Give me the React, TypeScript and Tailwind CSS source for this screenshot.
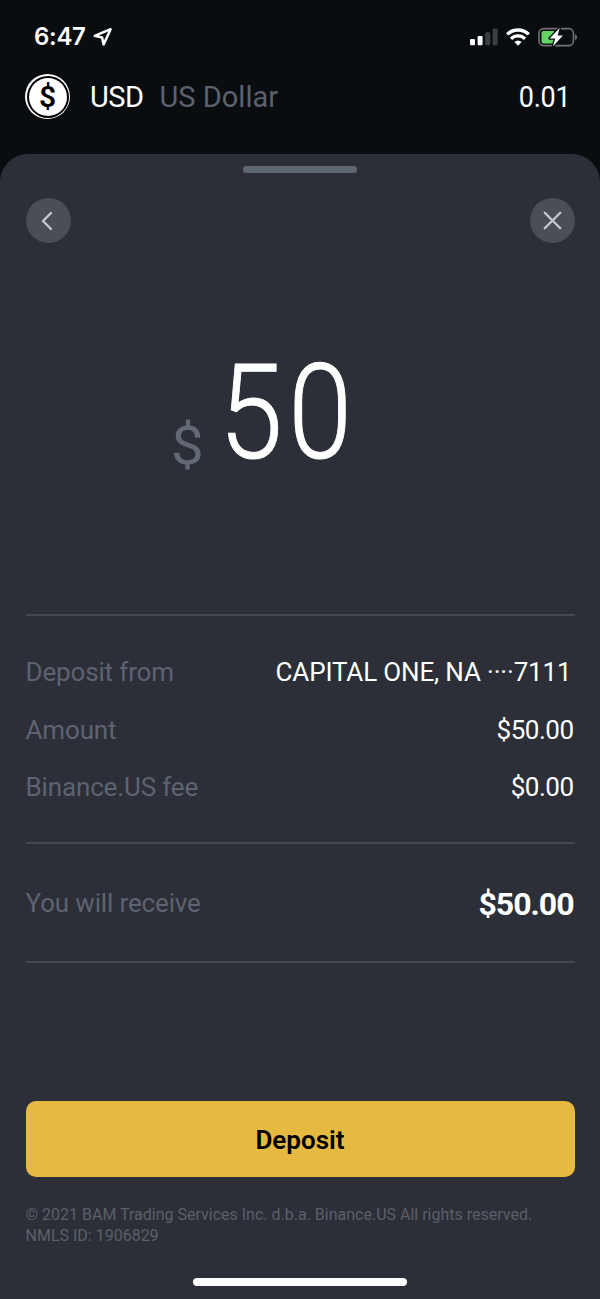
import type { ReactNode } from 'react'
import { ChevronLeft, X } from 'lucide-react'

interface DetailRowProps {
  label: string
  children: ReactNode
}

const FONT = "font-['Roboto','Liberation_Sans',sans-serif]"

function StatusBar() {
  return (
    <div className="flex h-[74px] items-center justify-between pl-[34px] pr-[22px]">
      <div className="flex items-center">
        <span className="w-[53px] whitespace-nowrap font-['Inter',sans-serif] text-[24px] leading-[28px] font-semibold tracking-[-0.3px]">
          6:47
        </span>
        <svg className="ml-[5px]" width="22" height="22" viewBox="0 0 22 22" fill="none">
          <path
            d="M2.8 9.9 L18.6 3.2 L11.6 18.4 L10.1 11.5 Z"
            stroke="#fff"
            strokeWidth="2.5"
            strokeLinejoin="round"
          />
        </svg>
      </div>
      <div className="flex items-center">
        <svg width="28" height="18" viewBox="0 0 28 18">
          <rect x="0" y="11" width="5" height="6.3" rx="1.3" fill="#fff" />
          <rect x="7.6" y="8" width="5" height="9.3" rx="1.3" fill="#fff" />
          <rect x="15.2" y="4.3" width="5" height="13" rx="1.3" fill="#3c3e41" />
          <rect x="22.7" y="0.5" width="5" height="16.8" rx="1.3" fill="#3c3e41" />
        </svg>
        <svg className="ml-[8px]" width="24" height="18" viewBox="0 0 24 18">
          <g fill="none" stroke="#fff" strokeWidth="3.3">
            <path d="M1.2 6.4 A15.4 15.4 0 0 1 22.8 6.4" />
            <path d="M5 10.9 A9.8 9.8 0 0 1 19 10.9" />
          </g>
          <path d="M8.4 14 A5.4 5.4 0 0 1 15.6 14 L12 17.8 Z" fill="#fff" />
        </svg>
        <svg className="ml-[8px]" width="40" height="20" viewBox="0 0 40 20">
          <rect x="1" y="1.6" width="34.4" height="17" rx="4.6" fill="none" stroke="#707275" strokeWidth="1.6" />
          <path d="M37 7.2 A3.2 3.2 0 0 1 37 13.2 Z" fill="#707275" />
          <path d="M5.5 3.9 H16 V16.4 H5.5 A2 2 0 0 1 3.5 14.4 V5.9 A2 2 0 0 1 5.5 3.9 Z" fill="#62d564" />
          <path
            d="M21.8 0.8 L11.7 11.5 H17.2 L15 19.2 L25 8.6 H19.6 Z"
            fill="#fff"
            stroke="#0a0d10"
            strokeWidth="2.6"
            paintOrder="stroke"
            strokeLinejoin="round"
          />
        </svg>
      </div>
    </div>
  )
}

function AssetHeader() {
  return (
    <div className="flex h-[80px] items-start pl-[25px] pr-[30px]">
      <div className="flex size-[45px] items-center justify-center rounded-full bg-white">
        <div className="flex size-[42px] items-center justify-center rounded-full bg-black">
          <div className="flex size-[38px] items-center justify-center rounded-full bg-white text-[30px] leading-[38px] font-semibold text-black">
            $
          </div>
        </div>
      </div>
      <span className="ml-[20px] text-[29px] leading-[46px] tracking-[-0.5px]">USD</span>
      <span className="ml-4 text-[29px] leading-[46px] text-[#5b616d]">US Dollar</span>
      <span className="ml-auto origin-right scale-x-[0.93] text-[29px] leading-[46px] tracking-[-0.3px]">0.01</span>
    </div>
  )
}

function DetailRow({ label, children }: DetailRowProps) {
  return (
    <div className="flex h-[57.5px] items-center justify-between whitespace-nowrap">
      <span className="text-[26px] tracking-[-0.15px] text-[#5d6370]">{label}</span>
      {children}
    </div>
  )
}

export default function App() {
  return (
    <div className={`flex h-[1299px] w-[600px] flex-col overflow-hidden bg-[#0a0d10] text-white ${FONT}`}>
      <StatusBar />
      <AssetHeader />

      <main className="flex flex-1 flex-col rounded-t-[28px] bg-[#2c2f37] px-[25.5px]">
        <div className="mx-auto mt-[12px] h-[7px] w-[114px] shrink-0 rounded-[3px] bg-[#5f6771]" />
        <div className="mt-[25px] flex justify-between">
          <button className="flex size-[45px] items-center justify-center rounded-full bg-[#4b4e57]">
            <ChevronLeft className="mr-[3px]" size={32} strokeWidth={1.8} color="#c4c8d0" />
          </button>
          <button className="flex size-[45px] items-center justify-center rounded-full bg-[#4b4e57]">
            <X size={31} strokeWidth={1.8} color="#c4c8d0" />
          </button>
        </div>

        <div className="flex h-[371px] items-start pt-[103px] pl-[145px]">
          <span className="mt-[65px] block w-[34px] origin-left scale-x-[1.1] text-[53px] leading-[70px] text-[#626975]">
            $
          </span>
          <span className="ml-[14px] block origin-left scale-x-[0.87] text-[132px] leading-[134px] font-light tracking-[6.5px] [-webkit-text-stroke:1px_white]">
            50
          </span>
        </div>

        <section className="h-[228px] border-t-2 border-[#444951] pt-[28px]">
          <DetailRow label="Deposit from">
            <span className="pr-[3px] text-[26px] tracking-[-0.15px]">CAPITAL ONE, NA ····7111</span>
          </DetailRow>
          <DetailRow label="Amount">
            <span className="mr-px text-[26px] tracking-[-0.5px]">$50.00</span>
          </DetailRow>
          <DetailRow label="Binance.US fee">
            <span className="mr-px text-[26px] tracking-[-0.5px]">$0.00</span>
          </DetailRow>
        </section>

        <section className="h-[121px] border-y-2 border-[#444951] pt-[31px]">
          <DetailRow label="You will receive">
            <span className="mr-px text-[32px] font-bold tracking-[-1px]">$50.00</span>
          </DetailRow>
        </section>

        <button className="mt-[138px] h-[76px] rounded-[10px] bg-[#e6b941] pt-[3px] text-[26px] font-semibold text-black">
          Deposit
        </button>
        <footer className="mt-[27px] text-[16px] leading-[21px] whitespace-nowrap text-[#5a5f69]">
          <p>© 2021 BAM Trading Services Inc. d.b.a. Binance.US All rights reserved.</p>
          <p>NMLS ID: 1906829</p>
        </footer>
        <div className="mx-auto mt-[32px] h-[8px] w-[214px] rounded-full bg-white" />
      </main>
    </div>
  )
}
